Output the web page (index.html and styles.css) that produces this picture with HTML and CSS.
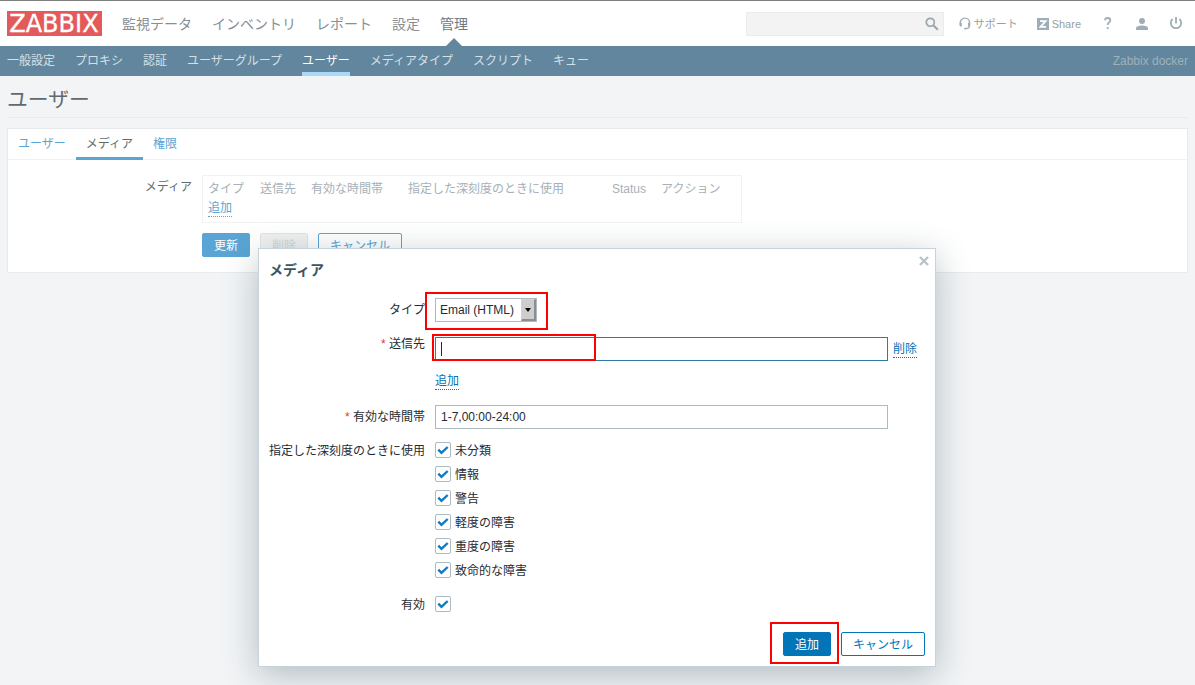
FILE: index.html
```
<!DOCTYPE html>
<html lang="ja">
<head>
  <meta charset="UTF-8">
  <meta name="viewport" content="width=device-width, initial-scale=1.0">
  <title>Zabbix docker: ユーザー</title>
  <link rel="stylesheet" href="styles.css">
</head>
<body>
  <header class="top-nav">
    <svg class="logo" width="95" height="25" viewBox="0 0 95 25">
      <rect width="95" height="25" fill="#e45959"/>
      <text x="2.2" y="21.3" textLength="89.5" lengthAdjust="spacingAndGlyphs">ZABBIX</text>
    </svg>
    <nav class="main-menu">
      <a>監視データ</a>
      <a>インベントリ</a>
      <a>レポート</a>
      <a>設定</a>
      <a class="selected">管理</a>
    </nav>
    <div class="search">
      <svg width="14" height="14" viewBox="0 0 14 14" fill="none" stroke="#98a6ae">
        <circle cx="5.3" cy="5.3" r="4" stroke-width="1.7"/>
        <path d="M8.3 8.3l4.5 4.5" stroke-width="2"/>
      </svg>
    </div>
    <a class="support">
      <svg width="12" height="13" viewBox="0 0 12 13" fill="none" stroke="#9fadb5">
        <path d="M1.2 8V5.8a4.6 4.6 0 0 1 9.4 0V8c0 2.4-1.4 3.6-4 3.6" stroke-width="1.4"/>
        <path d="M1.8 5.8v3.8M10 5.8v3.8" stroke-width="2"/>
        <path d="M5.3 11.6h2" stroke-width="1.8"/>
      </svg>
      サポート
    </a>
    <a class="share">
      <svg width="12" height="12" viewBox="0 0 12 12">
        <rect width="12" height="12" fill="#9fadb5"/>
        <path d="M3 3.1h5.6L3.5 8.9H9" fill="none" stroke="#fff" stroke-width="1.8"/>
      </svg>
      Share
    </a>
    <a class="icon help">
      <svg width="8" height="13" viewBox="0 0 8 13" fill="none" stroke="#9fadb5" stroke-width="1.8">
        <path d="M1 3.3C1.1 1.7 2.2 1 3.7 1c1.6 0 2.6.8 2.6 2.2 0 2.2-2.6 2.3-2.6 4.8"/>
        <path d="M3.7 10.1v2"/>
      </svg>
    </a>
    <a class="icon user">
      <svg width="12" height="12" viewBox="0 0 12 12" fill="#9fadb5">
        <circle cx="6" cy="3" r="3"/>
        <path d="M0 12v-1.8C0 8.3 3 7.4 6 7.4s6 .9 6 2.8V12z"/>
      </svg>
    </a>
    <a class="icon power">
      <svg width="14" height="13" viewBox="0 0 14 13" fill="none" stroke="#9fadb5" stroke-width="1.8">
        <path d="M3.6 2A5.2 5.2 0 1 0 10.4 2M7 0v6.4"/>
      </svg>
    </a>
  </header>

  <nav class="sub-nav">
    <a>一般設定</a>
    <a>プロキシ</a>
    <a>認証</a>
    <a>ユーザーグループ</a>
    <a class="selected">ユーザー</a>
    <a>メディアタイプ</a>
    <a>スクリプト</a>
    <a>キュー</a>
    <span class="server-name">Zabbix docker</span>
  </nav>

  <main>
    <h1>ユーザー</h1>
    <section class="panel">
      <div class="tabs">
        <a>ユーザー</a>
        <a class="active">メディア</a>
        <a>権限</a>
      </div>
      <div class="panel-row">
        <span class="panel-label">メディア</span>
        <div class="media-table">
          <div class="media-head">
            <span>タイプ</span>
            <span>送信先</span>
            <span>有効な時間帯</span>
            <span>指定した深刻度のときに使用</span>
            <span>Status</span>
            <span>アクション</span>
          </div>
          <a class="link">追加</a>
        </div>
      </div>
      <div class="panel-buttons">
        <button class="btn">更新</button>
        <button class="btn disabled">削除</button>
        <button class="btn alt">キャンセル</button>
      </div>
    </section>
  </main>

  <div class="dialog">
    <svg class="close" width="10" height="10" viewBox="0 0 10 10" stroke="#b9c3c9" stroke-width="2.4">
      <path d="M1 1l8 8M9 1l-8 8"/>
    </svg>
    <h4>メディア</h4>
    <div class="form">
      <label>タイプ</label>
      <div class="select">
        <span>Email (HTML)</span>
        <i class="select-btn"></i>
      </div>

      <label class="required sendto-label">送信先</label>
      <div class="sendto">
        <div class="sendto-row">
          <div class="input focused"><i class="caret"></i></div>
          <a class="link">削除</a>
        </div>
        <a class="link">追加</a>
      </div>

      <label class="required">有効な時間帯</label>
      <div class="input">1-7,00:00-24:00</div>

      <label class="check-label">指定した深刻度のときに使用</label>
      <div class="checks">
        <span class="check"><svg viewBox="0 0 14 14"><path d="M2.3 6.6l3.2 3.3 6.2-5.9"/></svg>未分類</span>
        <span class="check"><svg viewBox="0 0 14 14"><path d="M2.3 6.6l3.2 3.3 6.2-5.9"/></svg>情報</span>
        <span class="check"><svg viewBox="0 0 14 14"><path d="M2.3 6.6l3.2 3.3 6.2-5.9"/></svg>警告</span>
        <span class="check"><svg viewBox="0 0 14 14"><path d="M2.3 6.6l3.2 3.3 6.2-5.9"/></svg>軽度の障害</span>
        <span class="check"><svg viewBox="0 0 14 14"><path d="M2.3 6.6l3.2 3.3 6.2-5.9"/></svg>重度の障害</span>
        <span class="check"><svg viewBox="0 0 14 14"><path d="M2.3 6.6l3.2 3.3 6.2-5.9"/></svg>致命的な障害</span>
      </div>

      <label class="check-label">有効</label>
      <div class="checks">
        <span class="check"><svg viewBox="0 0 14 14"><path d="M2.3 6.6l3.2 3.3 6.2-5.9"/></svg></span>
      </div>
    </div>
    <div class="dialog-footer">
      <button class="btn">追加</button>
      <button class="btn alt">キャンセル</button>
    </div>
    <div class="mark mark-type"></div>
    <div class="mark mark-sendto"></div>
    <div class="mark mark-add"></div>
  </div>
</body>
</html>
```
FILE: styles.css
```
* {
  box-sizing: border-box;
}
body {
  margin: 0;
  height: 685px;
  overflow: hidden;
  border-top: 1px solid #7f7f7f;
  background: #f2f4f6;
  color: #1f2c33;
  font: 12px/18px "Liberation Sans", "Noto Sans CJK JP", sans-serif;
}

/* header */
.top-nav {
  display: flex;
  align-items: center;
  height: 45px;
  padding: 0 12px 0 7px;
  background: #fff;
  color: #878f94;
}
.logo {
  overflow: visible;
}
.logo text {
  fill: #fff;
  stroke: #fff;
  stroke-width: 0.3px;
  font: 24px "DejaVu Sans", sans-serif;
}
.main-menu {
  display: flex;
  gap: 20px;
  height: 45px;
  margin-left: 20px;
  font-size: 14px;
  line-height: 46px;
}
.main-menu .selected {
  position: relative;
  color: #737a7e;
}
.main-menu .selected::after {
  content: "";
  position: absolute;
  left: 6px;
  top: 37px;
  border: 8px solid transparent;
  border-top: 0;
  border-bottom-color: #61869d;
}
.search {
  display: flex;
  justify-content: flex-end;
  width: 198px;
  height: 24px;
  margin-left: auto;
  padding: 4px;
  border: 1px solid #ececec;
  background: #f3f3f3;
}
.support,
.share {
  display: flex;
  align-items: center;
  gap: 3px;
  font-size: 11px;
  color: #969fa4;
}
.support {
  margin-left: 15px;
}
.share {
  margin-left: 19px;
}
.icon {
  display: flex;
}
.help {
  margin-left: 23px;
}
.user {
  margin-left: 24px;
}
.power {
  margin-left: 21px;
}

.sub-nav {
  display: flex;
  gap: 20px;
  height: 30px;
  padding: 0 7px;
  background: #61869d;
  color: #d5e0e7;
  line-height: 30px;
}
.sub-nav .selected {
  border-bottom: 4px solid #a9d8f8;
  color: #fff;
}
.server-name {
  margin-left: auto;
  color: #9fb1bb;
}

/* page */
main {
  padding: 0 7px 0 8px;
}
h1 {
  height: 42px;
  margin: 0 0 10px;
  border-bottom: 1px solid #e7ecef;
  font-size: 20.8px;
  font-weight: normal;
  line-height: 48px;
  text-indent: -1px;
  color: #626a6f;
}
.panel {
  height: 145px;
  border: 1px solid #e7ebee;
  margin-left: -1px;
  background: #fff;
}
.tabs {
  display: flex;
  height: 31px;
  border-bottom: 1px solid #f0f2f4;
  line-height: 30px;
}
.tabs a {
  height: 31px;
  padding: 0 10px;
  color: #5aa5d4;
}
.tabs .active {
  border-bottom: 3px solid #5aa5d4;
  color: #626b70;
}
.panel-row {
  display: flex;
  gap: 10px;
  margin-top: 15px;
}
.panel-label {
  width: 184px;
  padding-top: 3px;
  text-align: right;
  color: #626b70;
}
.media-table {
  width: 540px;
  height: 48px;
  padding: 4px 5px;
  border: 1px solid #f0f2f4;
}
.media-head {
  display: grid;
  grid-template-columns: 52px 51px 97px 204px 49px auto;
  color: #a5b1b8;
}
.link {
  display: inline-block;
  height: 18px;
  border-bottom: 1px dotted #0275b8;
  color: #0275b8;
}
.media-table .link {
  margin-top: 1px;
  border-color: #5aa5d4;
  color: #5aa5d4;
}
.panel-buttons {
  display: flex;
  gap: 10px;
  margin: 10px 0 0 194px;
}
.btn {
  height: 24px;
  padding: 2px 11px 0;
  border: 1px solid #0275b8;
  border-radius: 2px;
  background: #0275b8;
  color: #fff;
  font: inherit;
  line-height: 20px;
}
.btn.alt {
  background: #fff;
  color: #0275b8;
}
.panel-buttons .btn {
  border-color: #5aa5d4;
  background: #5aa5d4;
}
.panel-buttons .alt {
  background: #fff;
  color: #5aa5d4;
}
.panel-buttons .disabled {
  border-color: #e0e4e6;
  background: #f0f0f0;
  color: #cfd5d9;
}

/* media popup */
.dialog {
  position: absolute;
  left: 258px;
  top: 248px;
  width: 678px;
  height: 419px;
  border: 1px solid #c8d3d9;
  background: #fff;
  box-shadow: 0 8px 32px rgba(50, 75, 90, 0.33);
}
.close {
  position: absolute;
  right: 6px;
  top: 7px;
}
.dialog h4 {
  margin: 0;
  padding: 11px 10px 0;
  font-size: 14px;
  line-height: 20px;
  color: #3c5563;
}
.form {
  display: grid;
  grid-template-columns: 156px 1fr;
  grid-template-rows: 30px 59px 24px 145px 24px;
  gap: 9px 10px;
  padding: 18px 10px 0;
}
.form label {
  padding-top: 2px;
  line-height: 20px;
  text-align: right;
}
.form .sendto-label {
  line-height: 10px;
}
.required::before {
  content: "* ";
  color: #e33734;
}
.form .check-label {
  padding-top: 3px;
}
.select {
  display: flex;
  width: 102px;
  height: 24px;
  padding-left: 4px;
  border: 1px solid #acbbc2;
  line-height: 22px;
  white-space: nowrap;
}
.select-btn {
  display: flex;
  align-items: center;
  justify-content: center;
  width: 15px;
  margin-left: auto;
  border: solid;
  border-width: 1px 2px 2px 1px;
  border-color: #d2d2d2 #8d8d8d #8d8d8d #d2d2d2;
  background: #cdcdcd;
}
.select-btn::before {
  content: "";
  border: 3.5px solid transparent;
  border-width: 4px 3px 0;
  border-top-color: #000;
}
.input {
  width: 453px;
  height: 24px;
  padding: 0 5px;
  border: 1px solid #acbbc2;
  line-height: 22px;
}
.focused {
  border-color: #2f7ba5;
}
.caret {
  display: block;
  width: 1px;
  height: 14px;
  margin-top: 4px;
  background: #1f2c33;
}
.sendto-row {
  display: flex;
  align-items: center;
  gap: 5px;
  margin-bottom: 11px;
}
.check {
  display: flex;
  align-items: center;
  gap: 4px;
  height: 24px;
  padding-top: 2px;
}
.check svg {
  width: 16px;
  height: 16px;
  margin-bottom: 2px;
  border: 1px solid #acbbc2;
  border-radius: 2px;
  fill: none;
  stroke: #0f7bbf;
  stroke-width: 2.4;
}
.dialog-footer {
  position: absolute;
  right: 10px;
  bottom: 10px;
  display: flex;
  gap: 10px;
}

/* highlight frames */
.mark {
  position: absolute;
  border: 2px solid #f00;
}
.mark-type {
  left: 166px;
  top: 43px;
  width: 123px;
  height: 38px;
}
.mark-sendto {
  left: 173px;
  top: 85px;
  width: 164px;
  height: 27px;
}
.mark-add {
  left: 511px;
  top: 373px;
  width: 69px;
  height: 42px;
}
```
